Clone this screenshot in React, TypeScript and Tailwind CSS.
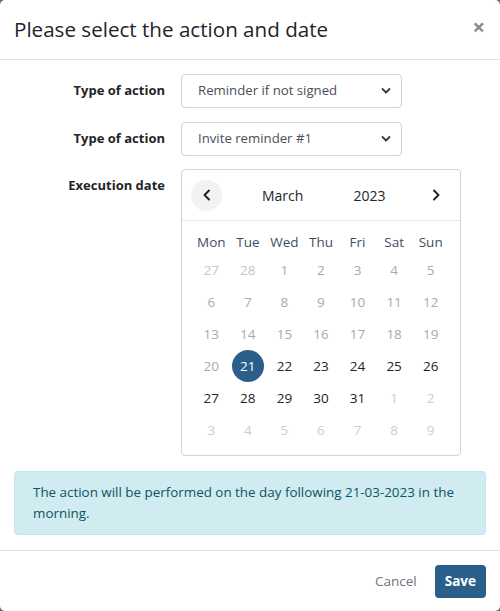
import React from "react";

const weekdays = ["Mon", "Tue", "Wed", "Thu", "Fri", "Sat", "Sun"];

type Day = { n: number; kind: "prev" | "past" | "sel" | "cur" | "next" };

function buildDays(): Day[] {
  const d: Day[] = [];
  d.push({ n: 27, kind: "prev" }, { n: 28, kind: "prev" });
  for (let i = 1; i <= 31; i++) {
    d.push({ n: i, kind: i < 21 ? "past" : i === 21 ? "sel" : "cur" });
  }
  for (let i = 1; i <= 9; i++) d.push({ n: i, kind: "next" });
  return d;
}

function Chevron({ dir }: { dir: "l" | "r" }) {
  return (
    <svg width="10" height="12" viewBox="0 0 10 12" fill="none">
      <path
        d={dir === "l" ? "M7 1.5 L2.5 6 L7 10.5" : "M3 1.5 L7.5 6 L3 10.5"}
        stroke="#212529"
        strokeWidth="2"
        strokeLinecap="round"
        strokeLinejoin="round"
      />
    </svg>
  );
}

function SelectBox({ value }: { value: string }) {
  return (
    <div className="h-[34px] w-[221px] border border-[#ced4da] rounded-[4px] bg-white flex items-center justify-between pl-[16px] pr-[10px] text-[13.2px] text-[#495057]">
      <span>{value}</span>
      <svg width="10" height="8" viewBox="0 0 10 8" fill="none">
        <path d="M1.5 2 L5 5.5 L8.5 2" stroke="#343a40" strokeWidth="1.8" strokeLinecap="round" strokeLinejoin="round" />
      </svg>
    </div>
  );
}

export default function App() {
  const days = buildDays();
  const colorFor = (k: Day["kind"]) =>
    k === "prev"
      ? "text-[#c3c6cc]"
      : k === "past"
      ? "text-[#a2abb8]"
      : k === "next"
      ? "text-[#cdcdcd]"
      : k === "cur"
      ? "text-[#212529]"
      : "text-white";
  return (
    <div
      className="w-[500px] h-[611px] bg-[#6b6b6b]"
      style={{ fontFamily: '"Open Sans", "Noto Sans", sans-serif' }}
    >
      <div className="w-full h-full bg-white rounded-[5px] flex flex-col">
        <div className="h-[60px] shrink-0 border-b border-[#dee2e6] flex items-center justify-between pl-[14px] pr-[15px]">
          <h5 className="text-[20.6px] text-[#212529] leading-none">
            Please select the action and date
          </h5>
          <span className="text-[22px] text-[#8a8a8a] leading-none -mt-[8px] font-bold">×</span>
        </div>
        <div className="flex-1 px-[14px] pt-[14px] pb-[15px] flex flex-col">
          <div className="flex items-center">
            <label className="w-[152px] text-right pr-[1px] text-[13px] font-bold text-[#212529]">Type of action</label>
            <div className="ml-[15px]">
              <SelectBox value="Reminder if not signed" />
            </div>
          </div>
          <div className="flex items-center mt-[14px]">
            <label className="w-[152px] text-right pr-[1px] text-[13px] font-bold text-[#212529]">Type of action</label>
            <div className="ml-[15px]">
              <SelectBox value="Invite reminder #1" />
            </div>
          </div>
          <div className="flex items-start mt-[13px]">
            <label className="w-[152px] text-right pr-[1px] text-[13px] font-bold text-[#212529] pt-[7px]">Execution date</label>
            <div className="ml-[15px] w-[280px] h-[287px] border border-[#ced4da] rounded-[4px]">
              <div className="h-[51px] border-b border-[#e3e6ea] flex items-center px-[9px]">
                <div className="w-[31px] h-[31px] rounded-full bg-[#f2f2f2] flex items-center justify-center">
                  <Chevron dir="l" />
                </div>
                <div className="flex-1 flex items-center text-[14px] text-[#212529]">
                  <span className="ml-[40px]">March</span>
                  <span className="ml-[50px]">2023</span>
                </div>
                <div className="w-[31px] h-[31px] flex items-center justify-center">
                  <Chevron dir="r" />
                </div>
              </div>
              <div className="px-[11px] pt-[9px]">
                <div className="grid grid-cols-7 h-[24px] items-center text-[13.5px] text-[#3f4d63]">
                  {weekdays.map((w) => (
                    <div key={w} className="text-center">{w}</div>
                  ))}
                </div>
                <div className="grid grid-cols-7">
                  {days.map((d, i) => (
                    <div key={i} className="h-[32px] flex items-center justify-center">
                      <div
                        className={`w-[32px] h-[32px] rounded-full flex items-center justify-center text-[13.5px] ${colorFor(d.kind)} ${
                          d.kind === "sel" ? "bg-[#2b5f8b]" : ""
                        }`}
                      >
                        {d.n}
                      </div>
                    </div>
                  ))}
                </div>
              </div>
            </div>
          </div>
          <div className="mt-[15px] bg-[#d1ecf1] border border-[#bee5eb] rounded-[4px] px-[18px] pt-[10px] pb-[10px] text-[13.4px] leading-[21px] text-[#0c5460]">
            The action will be performed on the day following 21-03-2023 in the morning.
          </div>
        </div>
        <div className="h-[62px] shrink-0 border-t border-[#dee2e6] flex items-center justify-end pr-[14px]">
          <span className="text-[13.5px] text-[#6c757d] mr-[18px]">Cancel</span>
          <button className="h-[33px] px-[10px] rounded-[4px] bg-[#2b5f8b] text-white text-[13.5px] font-bold">
            Save
          </button>
        </div>
      </div>
    </div>
  );
}
